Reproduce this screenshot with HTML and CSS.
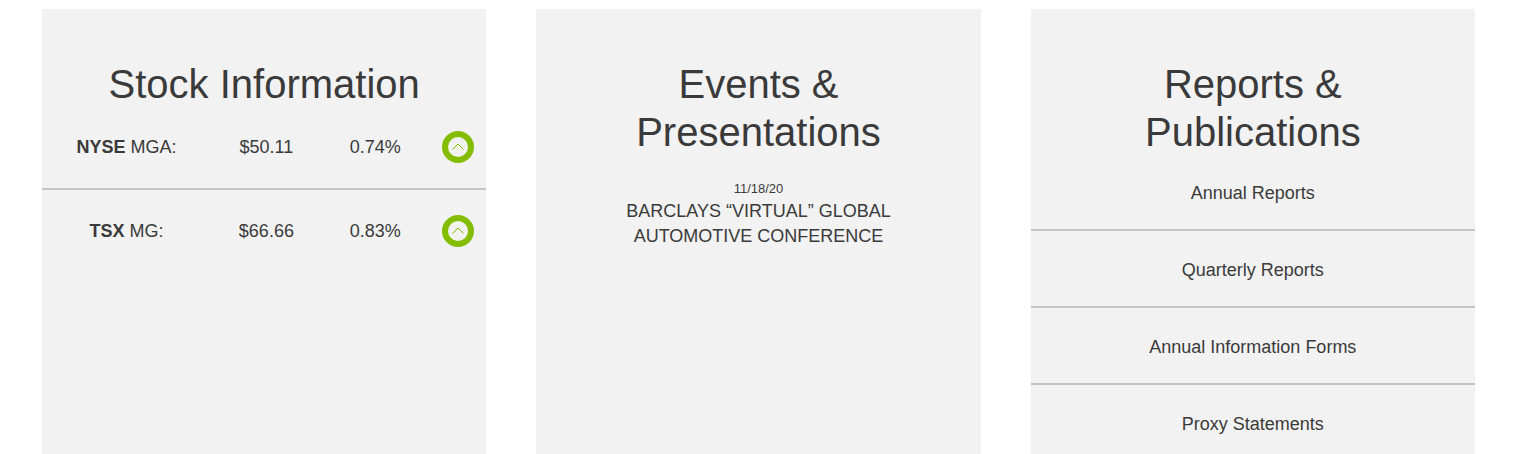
FILE: index.html
```html
<!DOCTYPE html>
<html lang="en">
<head>
<meta charset="utf-8">
<title>Investors</title>
<link rel="stylesheet" href="styles.css">
</head>
<body>
<main class="cards">
  <section class="card">
    <h2 class="title">Stock Information</h2>
    <table class="stocks">
      <tbody>
      <tr>
        <th class="symbol" scope="row"><b>NYSE</b> MGA:</th>
        <td class="price">$50.11</td>
        <td class="change">0.74%</td>
        <td class="trend"><svg class="up" viewBox="0 0 32 32" role="img" aria-label="Up"><circle cx="16" cy="16" r="13" /><path d="M10.500 18.500 16 13l5.500 5.500" /></svg></td>
      </tr>
      <tr>
        <th class="symbol" scope="row"><b>TSX</b> MG:</th>
        <td class="price">$66.66</td>
        <td class="change">0.83%</td>
        <td class="trend"><svg class="up" viewBox="0 0 32 32" role="img" aria-label="Up"><circle cx="16" cy="16" r="13" /><path d="M10.500 18.500 16 13l5.500 5.500" /></svg></td>
      </tr>
      </tbody>
    </table>
  </section>
  <section class="card">
    <h2 class="title">Events &amp;<br>Presentations</h2>
    <div class="event">
      <time class="date" datetime="2020-11-18">11/18/20</time>
      <a class="event-link" href="#">BARCLAYS “VIRTUAL” GLOBAL AUTOMOTIVE CONFERENCE</a>
    </div>
  </section>
  <section class="card">
    <h2 class="title">Reports &amp;<br>Publications</h2>
    <ul class="reports">
      <li class="report"><a class="report-link" href="#">Annual Reports</a></li>
      <li class="report"><a class="report-link" href="#">Quarterly Reports</a></li>
      <li class="report"><a class="report-link" href="#">Annual Information Forms</a></li>
      <li class="report"><a class="report-link" href="#">Proxy Statements</a></li>
    </ul>
  </section>
</main>
</body>
</html>
```
FILE: styles.css
```css
* { box-sizing: border-box; }
html { background: #fff; }
body {
  margin: 0;
  color: #3a3a3a;
  font: 18px/25px "Liberation Sans", Arial, sans-serif;
}
.cards {
  display: grid;
  grid-template-columns: repeat(3, 1fr);
  gap: 50px;
  padding: 9px 50px 0 42px;
}
.card {
  min-height: calc(100vh - 9px);
  padding-top: 51px;
  background: #f2f2f2;
  text-align: center;
}
.title {
  margin: 0;
  font-size: 40px;
  line-height: 48px;
  font-weight: 400;
}
.stocks {
  width: 100%;
  border-spacing: 0;
  table-layout: fixed;
}
.stocks td, .stocks th {
  height: 80px;
  padding: 0 0 2px;
  font-weight: 400;
}
.stocks tr + tr > * {
  height: 84px;
  padding: 0;
  border-top: 2px solid #c4c4c4;
}
.stocks b { font-weight: 700; }
.stocks .symbol { width: 38%; }
.stocks .price { width: 25%; }
.stocks .change { width: 24%; }
.up { display: block; width: 32px; height: 32px; margin: 0 12px 0 auto; }
.up circle { fill: #f2f2f2; stroke: #84bd00; stroke-width: 6; }
.up path { fill: none; stroke: #84bd00; stroke-width: 1; }
.event { padding: 23px 80px; }
.date { display: block; font-size: 13px; line-height: 20px; }
.event-link, .report-link { color: inherit; text-decoration: none; }
.reports { margin: 0; padding: 0; list-style: none; }
.report { padding: 25px 0 23px; }
.report + .report { padding-top: 27px; border-top: 2px solid #c4c4c4; }
.report:last-child { padding-bottom: 16px; }
```
